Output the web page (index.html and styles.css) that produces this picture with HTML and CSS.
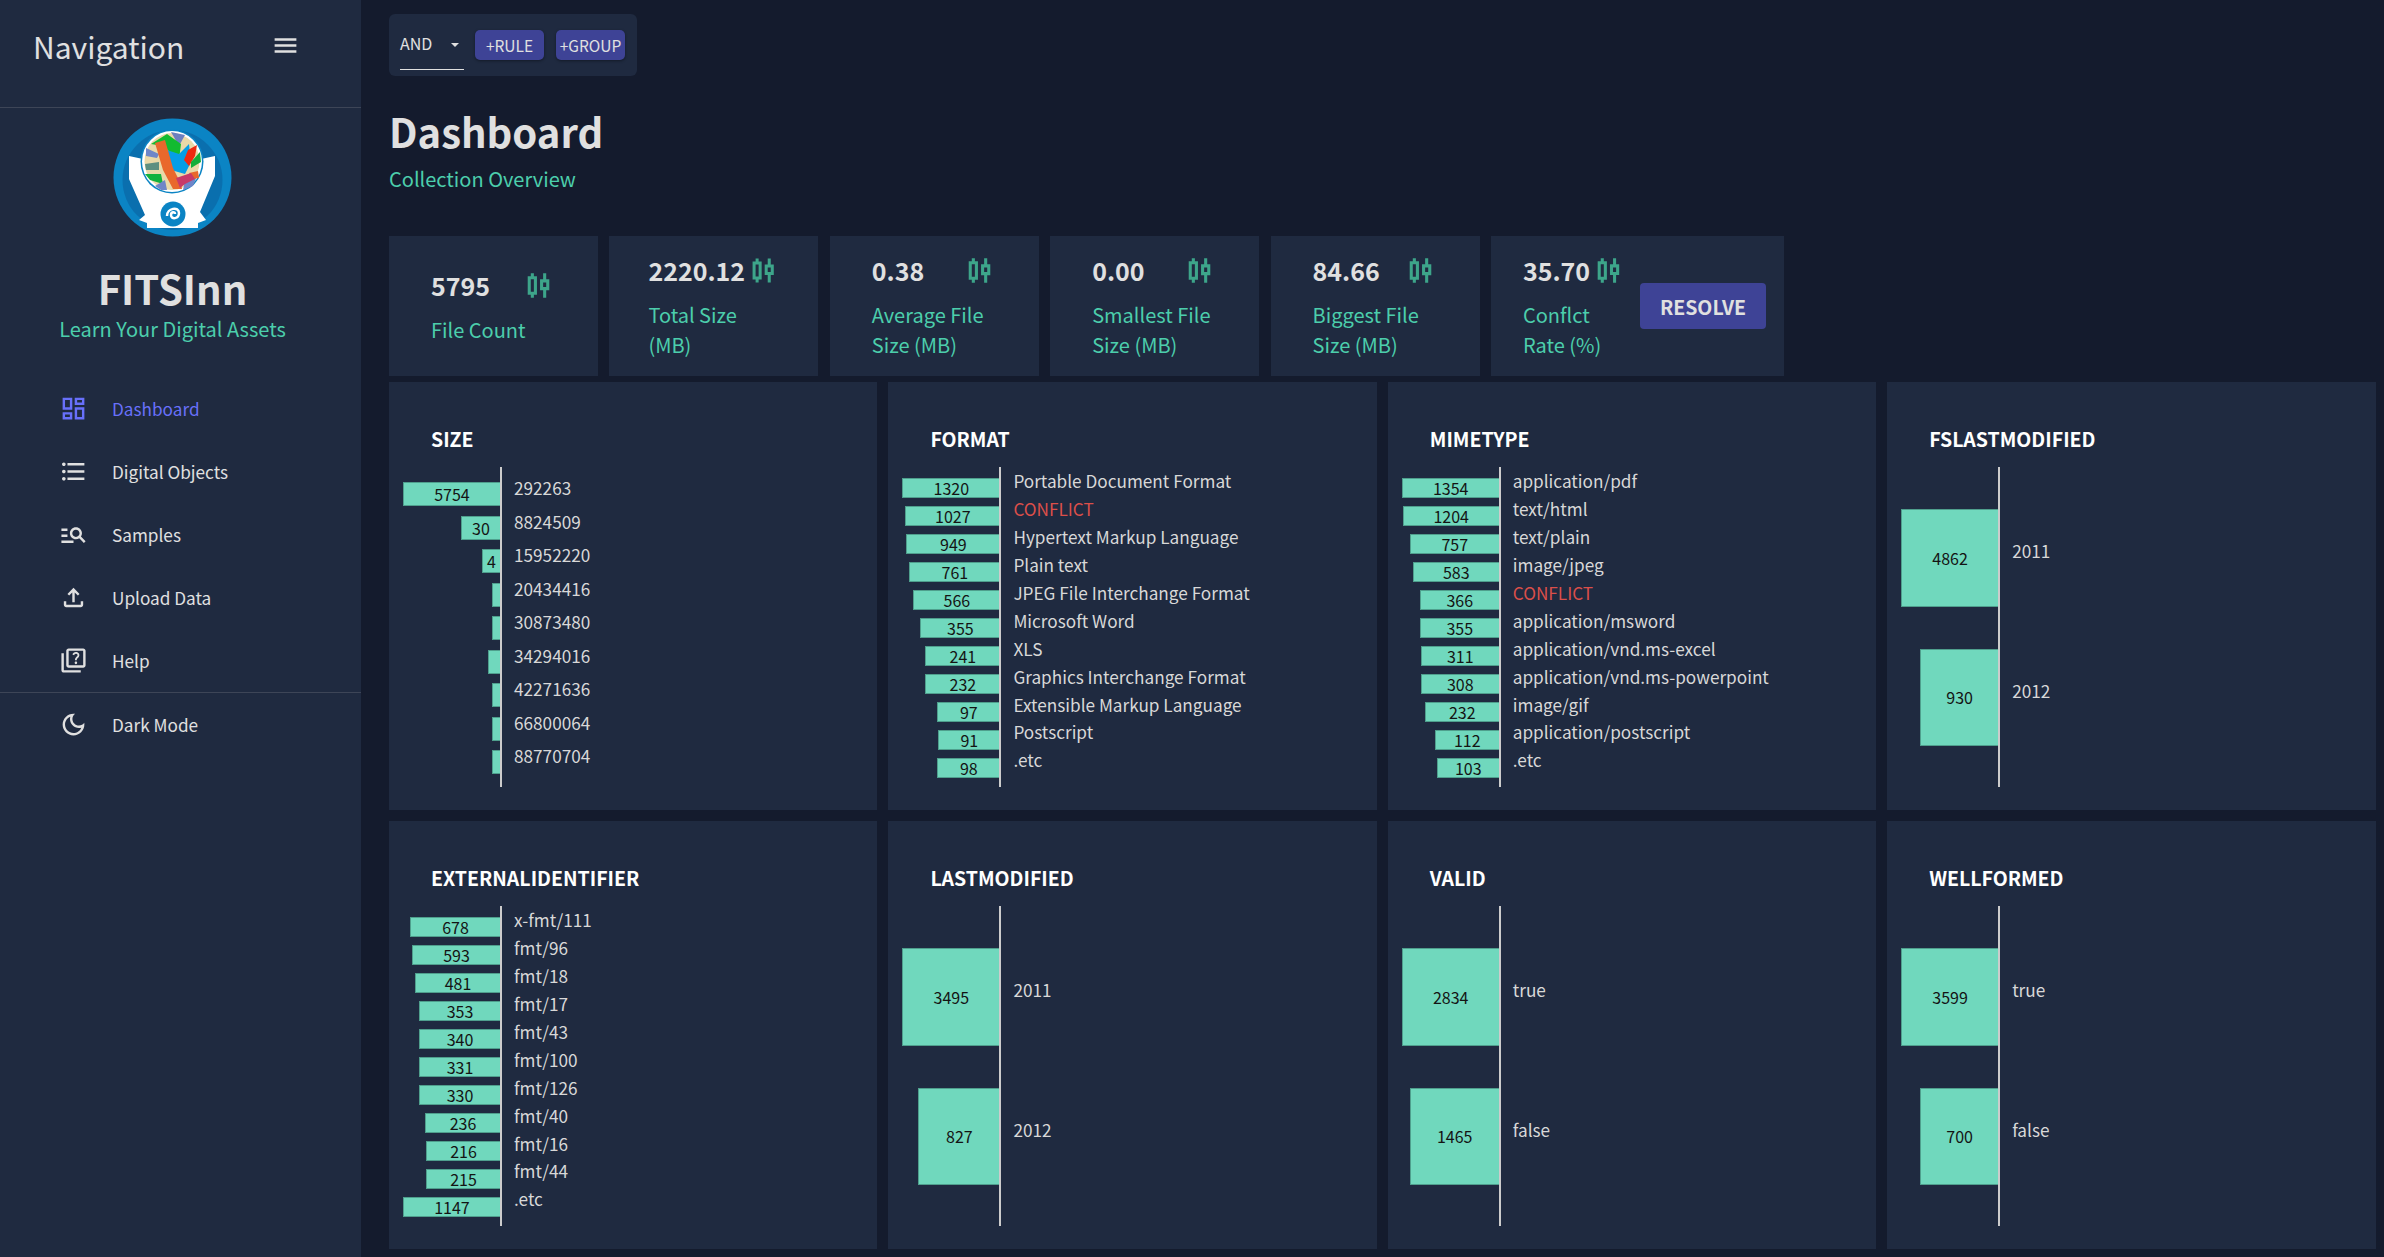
FILE: index.html
```html
<!DOCTYPE html>
<html lang="en">
<head>
    <meta charset="UTF-8">
    <meta name="viewport" content="width=device-width, initial-scale=1.0">
    <title>FITSInn</title>
    <link rel="stylesheet" href="styles.css">
</head>
<body>
    <aside class="sidebar">
        <div class="nav-head">
            <span class="nav-title">Navigation</span>
            <svg class="nav-icon" viewBox="0 0 24 24"><path d="M3 18h18v-2H3v2zm0-5h18v-2H3v2zm0-7v2h18V6H3z"/></svg>
        </div>
        <div class="brand">
            <svg class="logo" viewBox="0 0 120 120">
                <circle cx="59.5" cy="59.5" r="59" fill="#0b84c4"/>
                <circle cx="59.5" cy="62" r="50" fill="#0a6fae"/>
                <path d="M16 38 L30 41 L88 41 L102 38 L102 58 L87 94 L93 102 L85 105 L85 110 L34 110 L34 105 L26 102 L32 97 L16 61 Z" fill="#fff"/>
                <ellipse cx="59" cy="43.5" rx="31.5" ry="32" fill="#0b84c4"/>
                <ellipse cx="59" cy="43.5" rx="30" ry="30.5" fill="#fff"/>
                <ellipse cx="59" cy="43.5" rx="27.5" ry="28.5" fill="#ead9a8"/>
                <path d="M58 14 L72 17 L66 28 Z" fill="#6c80c0"/>
                <path d="M33 30 L46 36 L44 40 L33 38 Z" fill="#6f86c8"/>
                <path d="M32 46 L46 44 L46 52 L33 52 Z" fill="#5d8f80"/>
                <path d="M32 56 L48 56 L50 66 L37 62 Z" fill="#12b23e"/>
                <path d="M42 68 L52 62 L54 72 L48 72 Z" fill="#6f86c8"/>
                <path d="M72 62 L84 58 L80 68 L70 72 Z" fill="#6f86c8"/>
                <path d="M38 26 L54 16 L68 26 L66 42 L50 28 Z" fill="#12bb30"/>
                <path d="M54 32 L66 36 L76 26 L78 44 L72 56 L58 52 Z" fill="#069ee6"/>
                <path d="M71 42 L75 32 L84 27 L82 38 L76 48 Z" fill="#ef2a10"/>
                <path d="M78 44 L87 34 L88 44 L78 50 Z" fill="#14ae3a"/>
                <path d="M42 25 L52 22 L60 50 L68 66 L69 71 L60 71 L50 52 Z" fill="#e9682c"/>
                <path d="M76 55 L85 53 L86 60 L80 61 Z" fill="#e9682c"/>
                <path d="M63 60 L78 55 L82 61 L72 66 L67 70 Z" fill="#c83a68"/>
                <circle cx="60" cy="96" r="12.5" fill="#0b84c4"/>
                <path d="M54 98 C54 90 66 88 66 95 C66 101 58 102 58 97 C58 94 62 93 62 96" fill="none" stroke="#fff" stroke-width="2.5"/>
            </svg>
            <h2 class="brand-name">FITSInn</h2>
            <p class="brand-sub">Learn Your Digital Assets</p>
        </div>
        <nav class="menu">
            <a class="menu-item active">
                <svg viewBox="0 0 24 24"><path d="M19 5v2h-4V5h4M9 5v6H5V5h4m10 8v6h-4v-6h4M9 17v2H5v-2h4M21 3h-8v6h8V3zM11 3H3v10h8V3zm10 8h-8v10h8V11zm-10 4H3v6h8v-6z"/></svg>
                Dashboard
            </a>
            <a class="menu-item">
                <svg viewBox="0 0 24 24"><path d="M4 10.5c-.83 0-1.5.67-1.5 1.5s.67 1.5 1.5 1.5 1.5-.67 1.5-1.5-.67-1.5-1.5-1.5zm0-6c-.83 0-1.5.67-1.5 1.5S3.17 7.5 4 7.5 5.5 6.83 5.5 6 4.83 4.5 4 4.5zm0 12c-.83 0-1.5.68-1.5 1.5s.68 1.5 1.5 1.5 1.5-.68 1.5-1.5-.67-1.5-1.5-1.5zM7 19h14v-2H7v2zm0-6h14v-2H7v2zm0-8v2h14V5H7z"/></svg>
                Digital Objects
            </a>
            <a class="menu-item">
                <svg viewBox="0 0 24 24"><path d="M7 9H2V7h5v2zm0 3H2v2h5v-2zm13.59 7-3.83-3.83c-.8.52-1.74.83-2.76.83-2.76 0-5-2.24-5-5s2.24-5 5-5 5 2.24 5 5c0 1.02-.31 1.96-.83 2.75L22 17.59 20.59 19zM17 11c0-1.65-1.35-3-3-3s-3 1.35-3 3 1.35 3 3 3 3-1.35 3-3zM2 19h10v-2H2v2z"/></svg>
                Samples
            </a>
            <a class="menu-item">
                <svg viewBox="0 0 24 24"><path d="M18 15v3H6v-3H4v3c0 1.1.9 2 2 2h12c1.1 0 2-.9 2-2v-3h-2zM7 9l1.41 1.41L11 7.83V16h2V7.83l2.59 2.58L17 9l-5-5-5 5z"/></svg>
                Upload Data
            </a>
            <a class="menu-item">
                <svg viewBox="0 0 24 24"><path d="M4 6H2v14c0 1.1.9 2 2 2h14v-2H4V6zm16-4H8c-1.1 0-2 .9-2 2v12c0 1.1.9 2 2 2h12c1.1 0 2-.9 2-2V4c0-1.1-.9-2-2-2zm0 14H8V4h12v12zm-6.49-5.84c.41-.73 1.18-1.16 1.63-1.8.48-.68.21-1.94-1.14-1.94-.88 0-1.32.67-1.5 1.23l-1.37-.57C11.51 5.96 12.52 5 13.99 5c1.23 0 2.08.56 2.51 1.26.37.6.58 1.73.01 2.57-.63.93-1.23 1.21-1.56 1.81-.13.24-.18.4-.18 1.18h-1.52c.01-.41-.06-1.08.26-1.66zm-.56 3.79c0-.59.47-1.04 1.05-1.04.59 0 1.04.45 1.04 1.04 0 .58-.44 1.05-1.04 1.05-.58 0-1.05-.47-1.05-1.05z"/></svg>
                Help
            </a>
            <div class="menu-rule"></div>
            <a class="menu-item">
                <svg viewBox="0 0 24 24"><path d="M9.37 5.51c-.18.64-.27 1.31-.27 1.99 0 4.08 3.32 7.4 7.4 7.4.68 0 1.35-.09 1.99-.27C17.45 17.19 14.93 19 12 19c-3.86 0-7-3.14-7-7 0-2.93 1.81-5.45 4.37-6.49zM12 3c-4.97 0-9 4.03-9 9s4.03 9 9 9 9-4.03 9-9c0-.46-.04-.92-.1-1.36-.98 1.37-2.58 2.26-4.4 2.26-2.98 0-5.4-2.42-5.4-5.4 0-1.81.89-3.42 2.26-4.4-.44-.06-.9-.1-1.36-.1z"/></svg>
                Dark Mode
            </a>
        </nav>
    </aside>

    <main class="content">
        <div class="filter">
            <div class="select">AND <span class="caret"></span></div>
            <button class="btn-small">+RULE</button>
            <button class="btn-small">+GROUP</button>
        </div>

        <h1 class="page-title">Dashboard</h1>
        <p class="page-sub">Collection Overview</p>

        <section class="stats">
            <div class="stat single">
                <div class="stat-top"><b>5795</b><svg viewBox="0 0 24 24"><path d="M9 4H7v2H5v12h2v2h2v-2h2V6H9V4zm0 12H7V8h2v8zm10-8h-2V4h-2v4h-2v7h2v5h2v-5h2V8zm-2 5h-2v-3h2v3z"/></svg></div>
                <div class="stat-label">File Count</div>
            </div>
            <div class="stat tight">
                <div class="stat-top"><b>2220.12</b><svg viewBox="0 0 24 24"><path d="M9 4H7v2H5v12h2v2h2v-2h2V6H9V4zm0 12H7V8h2v8zm10-8h-2V4h-2v4h-2v7h2v5h2v-5h2V8zm-2 5h-2v-3h2v3z"/></svg></div>
                <div class="stat-label">Total Size<br>(MB)</div>
            </div>
            <div class="stat">
                <div class="stat-top"><b>0.38</b><svg viewBox="0 0 24 24"><path d="M9 4H7v2H5v12h2v2h2v-2h2V6H9V4zm0 12H7V8h2v8zm10-8h-2V4h-2v4h-2v7h2v5h2v-5h2V8zm-2 5h-2v-3h2v3z"/></svg></div>
                <div class="stat-label">Average File<br>Size (MB)</div>
            </div>
            <div class="stat">
                <div class="stat-top"><b>0.00</b><svg viewBox="0 0 24 24"><path d="M9 4H7v2H5v12h2v2h2v-2h2V6H9V4zm0 12H7V8h2v8zm10-8h-2V4h-2v4h-2v7h2v5h2v-5h2V8zm-2 5h-2v-3h2v3z"/></svg></div>
                <div class="stat-label">Smallest File<br>Size (MB)</div>
            </div>
            <div class="stat">
                <div class="stat-top"><b>84.66</b><svg viewBox="0 0 24 24"><path d="M9 4H7v2H5v12h2v2h2v-2h2V6H9V4zm0 12H7V8h2v8zm10-8h-2V4h-2v4h-2v7h2v5h2v-5h2V8zm-2 5h-2v-3h2v3z"/></svg></div>
                <div class="stat-label">Biggest File<br>Size (MB)</div>
            </div>
            <div class="stat wide">
                <div>
                    <div class="stat-top"><b>35.70</b><svg viewBox="0 0 24 24"><path d="M9 4H7v2H5v12h2v2h2v-2h2V6H9V4zm0 12H7V8h2v8zm10-8h-2V4h-2v4h-2v7h2v5h2v-5h2V8zm-2 5h-2v-3h2v3z"/></svg></div>
                    <div class="stat-label">Conflct<br>Rate (%)</div>
                </div>
                <button class="btn-resolve">RESOLVE</button>
            </div>
        </section>

        <section class="charts">
            <div class="chart-card">
                <h3>SIZE</h3>
                <div class="chart rows-9">
                    <div class="bars">
                        <div class="bar" style="width:97px">5754</div>
                        <div class="bar" style="width:39px">30</div>
                        <div class="bar" style="width:18px">4</div>
                        <div class="bar" style="width:8px"></div>
                        <div class="bar" style="width:8px"></div>
                        <div class="bar" style="width:12px"></div>
                        <div class="bar" style="width:8px"></div>
                        <div class="bar" style="width:8px"></div>
                        <div class="bar" style="width:8px"></div>
                    </div>
                    <ul class="labels">
                        <li>292263</li><li>8824509</li><li>15952220</li><li>20434416</li><li>30873480</li><li>34294016</li><li>42271636</li><li>66800064</li><li>88770704</li>
                    </ul>
                </div>
            </div>

            <div class="chart-card">
                <h3>FORMAT</h3>
                <div class="chart rows-11">
                    <div class="bars">
                        <div class="bar" style="width:97px">1320</div>
                        <div class="bar" style="width:94px">1027</div>
                        <div class="bar" style="width:93px">949</div>
                        <div class="bar" style="width:90px">761</div>
                        <div class="bar" style="width:86px">566</div>
                        <div class="bar" style="width:79px">355</div>
                        <div class="bar" style="width:74px">241</div>
                        <div class="bar" style="width:74px">232</div>
                        <div class="bar" style="width:62px">97</div>
                        <div class="bar" style="width:61px">91</div>
                        <div class="bar" style="width:62px">98</div>
                    </div>
                    <ul class="labels">
                        <li>Portable Document Format</li><li class="conflict">CONFLICT</li><li>Hypertext Markup Language</li><li>Plain text</li><li>JPEG File Interchange Format</li><li>Microsoft Word</li><li>XLS</li><li>Graphics Interchange Format</li><li>Extensible Markup Language</li><li>Postscript</li><li>.etc</li>
                    </ul>
                </div>
            </div>

            <div class="chart-card">
                <h3>MIMETYPE</h3>
                <div class="chart rows-11">
                    <div class="bars">
                        <div class="bar" style="width:97px">1354</div>
                        <div class="bar" style="width:96px">1204</div>
                        <div class="bar" style="width:89px">757</div>
                        <div class="bar" style="width:86px">583</div>
                        <div class="bar" style="width:79px">366</div>
                        <div class="bar" style="width:79px">355</div>
                        <div class="bar" style="width:78px">311</div>
                        <div class="bar" style="width:78px">308</div>
                        <div class="bar" style="width:74px">232</div>
                        <div class="bar" style="width:64px">112</div>
                        <div class="bar" style="width:62px">103</div>
                    </div>
                    <ul class="labels">
                        <li>application/pdf</li><li>text/html</li><li>text/plain</li><li>image/jpeg</li><li class="conflict">CONFLICT</li><li>application/msword</li><li>application/vnd.ms-excel</li><li>application/vnd.ms-powerpoint</li><li>image/gif</li><li>application/postscript</li><li>.etc</li>
                    </ul>
                </div>
            </div>

            <div class="chart-card">
                <h3>FSLASTMODIFIED</h3>
                <div class="chart rows-2">
                    <div class="bars">
                        <div class="bar" style="width:97px">4862</div>
                        <div class="bar" style="width:78px">930</div>
                    </div>
                    <ul class="labels">
                        <li>2011</li><li>2012</li>
                    </ul>
                </div>
            </div>

            <div class="chart-card">
                <h3>EXTERNALIDENTIFIER</h3>
                <div class="chart rows-11">
                    <div class="bars">
                        <div class="bar" style="width:90px">678</div>
                        <div class="bar" style="width:88px">593</div>
                        <div class="bar" style="width:85px">481</div>
                        <div class="bar" style="width:81px">353</div>
                        <div class="bar" style="width:81px">340</div>
                        <div class="bar" style="width:81px">331</div>
                        <div class="bar" style="width:81px">330</div>
                        <div class="bar" style="width:75px">236</div>
                        <div class="bar" style="width:74px">216</div>
                        <div class="bar" style="width:74px">215</div>
                        <div class="bar" style="width:97px">1147</div>
                    </div>
                    <ul class="labels">
                        <li>x-fmt/111</li><li>fmt/96</li><li>fmt/18</li><li>fmt/17</li><li>fmt/43</li><li>fmt/100</li><li>fmt/126</li><li>fmt/40</li><li>fmt/16</li><li>fmt/44</li><li>.etc</li>
                    </ul>
                </div>
            </div>

            <div class="chart-card">
                <h3>LASTMODIFIED</h3>
                <div class="chart rows-2">
                    <div class="bars">
                        <div class="bar" style="width:97px">3495</div>
                        <div class="bar" style="width:81px">827</div>
                    </div>
                    <ul class="labels">
                        <li>2011</li><li>2012</li>
                    </ul>
                </div>
            </div>

            <div class="chart-card">
                <h3>VALID</h3>
                <div class="chart rows-2">
                    <div class="bars">
                        <div class="bar" style="width:97px">2834</div>
                        <div class="bar" style="width:89px">1465</div>
                    </div>
                    <ul class="labels">
                        <li>true</li><li>false</li>
                    </ul>
                </div>
            </div>

            <div class="chart-card">
                <h3>WELLFORMED</h3>
                <div class="chart rows-2">
                    <div class="bars">
                        <div class="bar" style="width:97px">3599</div>
                        <div class="bar" style="width:78px">700</div>
                    </div>
                    <ul class="labels">
                        <li>true</li><li>false</li>
                    </ul>
                </div>
            </div>
        </section>
    </main>
</body>
</html>
```

FILE: styles.css
```css
* {
    box-sizing: border-box;
}
html, body {
    height: 100%;
}
body {
    margin: 0;
    display: flex;
    overflow: hidden;
    background-color: #141b2d;
    color: #e0e0e0;
    font-family: "Noto Sans CJK SC", "Noto Sans", sans-serif;
}

/* sidebar */
.sidebar {
    width: 361px;
    flex-shrink: 0;
    background-color: #1f2a40;
}
.nav-head {
    height: 108px;
    padding: 0 61px 16px 33px;
    display: flex;
    align-items: center;
    justify-content: space-between;
    border-bottom: 1px solid #3d4557;
}
.nav-title {
    font-size: 30px;
    line-height: 1;
}
.nav-icon {
    width: 29px;
    height: 29px;
    fill: #e0e0e0;
}
.brand {
    display: flex;
    flex-direction: column;
    align-items: center;
    padding: 10px 16px 0 0;
}
.logo {
    width: 120px;
    height: 120px;
}
.brand-name {
    margin: 24px 0 0;
    font-size: 40px;
    line-height: 52px;
    font-weight: 700;
}
.brand-sub {
    margin: 0;
    font-size: 20px;
    line-height: 30px;
    color: #4cceac;
}
.menu {
    margin-top: 33px;
}
.menu-item {
    height: 63px;
    padding-left: 59px;
    display: flex;
    align-items: center;
    gap: 24px;
    font-size: 17.2px;
    color: #e0e0e0;
}
.menu-item svg {
    width: 29px;
    height: 29px;
    fill: currentColor;
}
.menu-item.active {
    color: #6870fa;
}
.menu-rule {
    height: 1px;
    background-color: #3d4557;
}

/* main area */
.content {
    flex: 1;
    min-width: 0;
    padding: 14px 8.5px 8px 28px;
}
.filter {
    width: 248px;
    height: 62px;
    padding: 0 11px;
    display: flex;
    align-items: center;
    gap: 12px;
    background-color: #1f2a40;
    border-radius: 6px;
}
.select {
    width: 64px;
    height: 50px;
    margin-right: -1px;
    padding-top: 13px;
    display: flex;
    justify-content: space-between;
    font-size: 16px;
    line-height: 21px;
    border-bottom: 1px solid #e0e0e0;
}
.caret {
    margin: 10px 5px 0 0;
    border-left: 4px solid transparent;
    border-right: 4px solid transparent;
    border-top: 4px solid #e0e0e0;
    height: 0;
}
.btn-small {
    width: 69px;
    height: 30px;
    padding: 0;
    border: none;
    border-radius: 5px;
    background-color: #3e4396;
    color: #e0e0e0;
    font-family: inherit;
    font-size: 15.5px;
    box-shadow: 0 1px 3px rgba(0, 0, 0, .4);
}
.page-title {
    margin: 24px 0 0;
    font-size: 40px;
    line-height: 62px;
    font-weight: 700;
}
.page-sub {
    margin: 1px 0 0;
    font-size: 20px;
    line-height: 32px;
    color: #4cceac;
}

/* stat cards */
.stats {
    margin-top: 41px;
    display: flex;
    gap: 11.4px;
}
.stat {
    width: 209px;
    height: 140px;
    padding: 19px 0 0 42px;
    background-color: #1f2a40;
}
.stat.single {
    padding-top: 34px;
}
.stat.tight {
    padding-left: 39px;
}
.stat.wide {
    width: 293px;
    padding-left: 32px;
    display: flex;
    align-items: flex-start;
    justify-content: space-between;
    padding-right: 18px;
}
.stat-top {
    width: 118px;
    display: flex;
    align-items: center;
    justify-content: space-between;
    height: 30px;
}
.stat.tight .stat-top {
    width: 125px;
}
.stat.wide .stat-top {
    width: 96px;
}
.stat-top b {
    font-size: 25px;
    font-weight: 700;
}
.stat-top svg {
    width: 37px;
    height: 37px;
    margin-right: -8px;
    fill: #3da58a;
}
.stat-label {
    margin-top: 15px;
    font-size: 20px;
    line-height: 30px;
    color: #4cceac;
}
.btn-resolve {
    width: 126px;
    height: 46px;
    margin-top: 28px;
    border: none;
    border-radius: 4px;
    background-color: #3e4396;
    color: #e0e0e0;
    font-family: inherit;
    font-size: 19.5px;
    font-weight: 600;
}

/* charts */
.charts {
    margin-top: 6px;
    display: grid;
    grid-template-columns: repeat(4, 1fr);
    gap: 11px;
}
.chart-card {
    height: 428px;
    padding: 43px 0 0 14px;
    background-color: #1f2a40;
}
.chart-card h3 {
    margin: 0 0 14px 28px;
    font-size: 19.5px;
    line-height: 28px;
    font-weight: 600;
    color: #fff;
}
.chart {
    height: 320px;
    display: flex;
}
.bars {
    width: 99px;
    border-right: 2px solid #ccc;
    display: flex;
    flex-direction: column;
    align-items: flex-end;
}
.bar {
    display: flex;
    align-items: center;
    justify-content: center;
    flex-shrink: 0;
    background-color: #70d8bd;
    border: 1px solid #4f9f8d;
    border-right: none;
    color: #141414;
    font-size: 16px;
}
.labels {
    margin: 0;
    padding: 0 0 0 12px;
    list-style: none;
    font-size: 17.2px;
    color: #d8d8d8;
}
.labels li {
    display: flex;
    align-items: center;
    white-space: nowrap;
}
.conflict {
    color: #db4f4a;
}
.rows-9 .bars {
    padding-top: 15px;
    gap: 9.5px;
}
.rows-9 .bar {
    height: 24px;
}
.rows-9 .labels {
    padding-top: 4px;
}
.rows-9 .labels li {
    height: 33.5px;
}
.rows-11 .bars {
    padding-top: 11px;
    gap: 8.5px;
}
.rows-11 .bar {
    height: 19.5px;
}
.rows-11 .labels li {
    height: 27.9px;
}
.rows-2 .bars {
    padding-top: 42px;
    gap: 42px;
}
.rows-2 .bar {
    height: 97.5px;
}
.rows-2 .labels {
    padding-top: 14px;
}
.rows-2 .labels li {
    height: 139.5px;
}
```
